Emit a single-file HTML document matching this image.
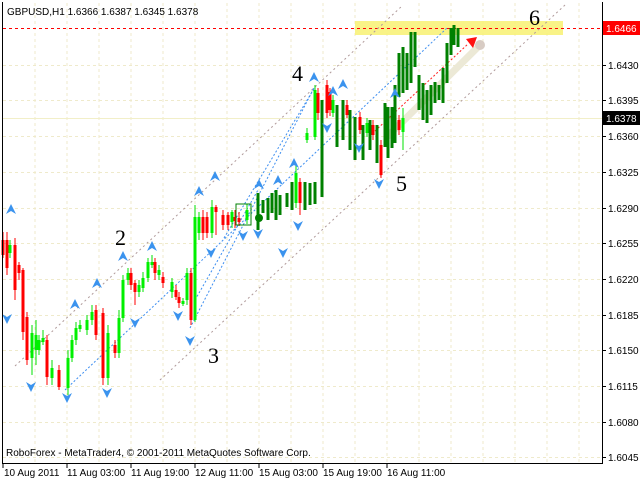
<!DOCTYPE html>
<html><head><meta charset="utf-8"><style>
html,body{margin:0;padding:0;background:#fff;}
svg{display:block;font-family:"Liberation Sans",sans-serif;}
</style></head><body>
<svg width="640" height="480" viewBox="0 0 640 480" xmlns="http://www.w3.org/2000/svg">
<defs>
<polygon id="u" points="0,-6 5,4 0,1 -5,4"/>
<polygon id="d" points="0,6 5,-4 0,-1 -5,-4"/>
</defs>
<rect width="640" height="480" fill="#fff"/>
<g stroke="#efeacb" stroke-width="1" stroke-dasharray="3,3">
<path d="M35 3V462M67 3V462M99 3V462M131 3V462M163 3V462M195 3V462M227 3V462M259 3V462M291 3V462M323 3V462M355 3V462M387 3V462M419 3V462M451 3V462M483 3V462M515 3V462M547 3V462M579 3V462"/>
<path d="M3 65.5H602M3 100.5H602M3 136.5H602M3 172.5H602M3 208.5H602M3 243.5H602M3 279.5H602M3 315.5H602M3 350.5H602M3 386.5H602M3 422.5H602M3 457.5H602"/>
</g>
<path d="M3 118.5H602" stroke="#f2efc8" stroke-width="1"/>
<rect x="355" y="21" width="208" height="14" fill="#f8f27a" opacity="0.9"/>
<path d="M3 28.5H602" stroke="#ff0000" stroke-dasharray="3,3"/>
<g stroke="#b09a9a" stroke-dasharray="2,3" fill="none">
<path d="M15 366L402 6"/>
<path d="M160 380L565 5"/>
</g>
<g stroke="#3d8ef0" stroke-dasharray="2,2" fill="none">
<path d="M65 390L447 28"/>
<path d="M190 328L315 86"/>
<path d="M224 238L315 87"/>
<path d="M195 300L258 190"/>
</g>
<path d="M388 136L480 45" stroke="#ece9d6" stroke-width="7" stroke-linecap="round"/>
<circle cx="480" cy="45" r="5" fill="#d8ccc4"/>
<path d="M375 131L468 44" stroke="#ff2020" stroke-dasharray="2,2"/>
<polygon points="477,37 466,39 473,48" fill="#ff1010"/>
<g stroke-width="1" fill="none">
<path stroke="#ff0000" d="M3 232V258M7 232V275M15 238V300M19 262V280M23 268V340M27 312V365M47 335V385M59 365V390M96 305V340M103 308V385M115 340V358M131 268V290M135 280V305M155 258V280M163 272V288M176 285V300M179 292V308M191 268V325M203 210V240M207 212V238M216 205V235M223 210V230M228 212V230M235 210V228M239 212V226M300 178V215M318 88V120M327 80V118M330 88V116M347 100V118M360 112V134M373 120V140M381 140V178M399 115V135"/>
<path stroke="#00e000" d="M10 240V258M32 325V375M36 320V365M39 335V355M43 330V345M52 360V385M68 350V395M72 335V362M76 322V345M80 320V332M87 315V335M92 305V325M108 325V385M119 310V358M123 275V322M128 268V285M139 280V297M143 272V292M148 258V282M152 255V268M159 265V280M172 278V298M183 298V306M187 268V305M195 205V322M199 212V240M212 200V238M232 210V228M247 204V224M296 166V208M307 128V143M315 85V140M333 95V117M367 118V137M403 108V150"/>
</g>
<g stroke-width="3" fill="none">
<path stroke="#ff0000" d="M3 240V255M7 240V268M15 245V290M19 265V273M23 270V332M27 317V360M47 340V377M59 370V387M96 310V335M103 313V378M115 345V353M131 273V285M135 283V292M155 262V273M163 277V283M176 290V297M179 297V303M191 273V320M203 217V233M207 217V233M216 207V212M223 215V225M228 215V225M235 217V221M239 218V222M300 182V203M318 93V113M327 85V113M330 92V110M347 105V115M360 117V130M373 125V135M381 145V175M399 120V130"/>
<path stroke="#00f000" d="M10 245V253M32 333V358M36 335V350M39 340V350M43 338V342M52 368V378M68 358V388M72 340V358M76 328V340M80 325V329M87 320V330M92 312V320M108 333V378M119 318V353M123 280V318M128 273V280M139 285V292M143 278V288M148 262V278M152 262V265M159 270V275M172 282V292M183 301V304M187 273V300M195 217V320M199 217V233M212 207V233M232 212V222M247 210V220M296 173V203M307 133V140M315 90V137M333 100V113M367 123V133M403 118V132"/>
<path stroke="#008000" stroke-width="3" d="M258 193V230M263 200V213M268 198V220M272 193V213M276 190V220M280 195V215M287 193V207M292 182V210M305 182V210M310 183V205M315 182V204M322 100V197M337 105V147M343 100V140M350 110V150M355 117V160M363 125V160M370 120V150M377 125V163M385 103V147M388 107V158M392 107V148M395 85V143M399 53V97M403 47V93M407 53V90M411 32V83M415 32V67M419 75V110M423 83V120M427 90V123M431 85V115M435 82V103M439 85V100M443 68V103M447 43V83M451 28V55M454 25V45M458 28V47"/>
</g>
<rect x="236" y="204" width="15" height="21" fill="none" stroke="#008000"/>
<circle cx="259" cy="218" r="4" fill="#008000"/>
<g fill="#3b93ee">
<use href="#u" x="11" y="210"/><use href="#u" x="199" y="192"/><use href="#u" x="215" y="177"/>
<use href="#u" x="259" y="185"/><use href="#u" x="278" y="181"/><use href="#u" x="294" y="164"/>
<use href="#u" x="314" y="78"/><use href="#u" x="333" y="92"/><use href="#u" x="343" y="85"/>
<use href="#u" x="395" y="94"/><use href="#u" x="123" y="257"/><use href="#u" x="152" y="247"/>
<use href="#u" x="97" y="284"/><use href="#u" x="75" y="305"/>
<use href="#d" x="243" y="235"/><use href="#d" x="258" y="233"/><use href="#d" x="298" y="225"/>
<use href="#d" x="327" y="127"/><use href="#d" x="359" y="147"/><use href="#d" x="379" y="183"/>
<use href="#d" x="7" y="318"/><use href="#d" x="31" y="386"/><use href="#d" x="67" y="397"/>
<use href="#d" x="107" y="392"/><use href="#d" x="135" y="322"/><use href="#d" x="178" y="315"/>
<use href="#d" x="190" y="340"/><use href="#d" x="211" y="252"/><use href="#d" x="283" y="252"/>
</g>
<g font-family="Liberation Serif,serif" font-size="22" fill="#000">
<text x="115" y="245">2</text><text x="208" y="363">3</text><text x="292" y="81">4</text>
<text x="396" y="191">5</text><text x="529" y="25">6</text>
</g>
<text x="7" y="15" font-size="10" fill="#000">GBPUSD,H1  1.6366 1.6387 1.6345 1.6378</text>
<text x="6" y="456" font-size="10" fill="#000">RoboForex - MetaTrader4, © 2001-2011 MetaQuotes Software Corp.</text>
<path d="M2.5 2V463.5H602.5V2" fill="none" stroke="#000"/>
<g stroke="#000"><path d="M602 65.5h4M602 100.5h4M602 136.5h4M602 172.5h4M602 208.5h4M602 243.5h4M602 279.5h4M602 315.5h4M602 350.5h4M602 386.5h4M602 422.5h4M602 457.5h4"/></g>
<g font-size="10" fill="#000">
<text x="608" y="69">1.6430</text><text x="608" y="104">1.6395</text><text x="608" y="140">1.6360</text>
<text x="608" y="176">1.6325</text><text x="608" y="212">1.6290</text><text x="608" y="247">1.6255</text>
<text x="608" y="283">1.6220</text><text x="608" y="319">1.6185</text><text x="608" y="354">1.6150</text>
<text x="608" y="390">1.6115</text><text x="608" y="426">1.6080</text><text x="608" y="461">1.6045</text>
</g>
<rect x="603" y="21" width="37" height="14" fill="#ff0000"/>
<text x="606" y="32" font-size="10" fill="#fff">1.6466</text>
<rect x="603" y="111" width="37" height="14" fill="#000"/>
<text x="606" y="122" font-size="10" fill="#fff">1.6378</text>
<g stroke="#000"><path d="M3 463v5M67 463v5M131 463v5M195 463v5M259 463v5M323 463v5M387 463v5"/></g>
<g font-size="10" fill="#000">
<text x="4" y="476">10 Aug 2011</text><text x="67" y="476">11 Aug 03:00</text><text x="131" y="476">11 Aug 19:00</text>
<text x="195" y="476">12 Aug 11:00</text><text x="259" y="476">15 Aug 03:00</text><text x="323" y="476">15 Aug 19:00</text>
<text x="387" y="476">16 Aug 11:00</text>
</g>
</svg>
</body></html>
